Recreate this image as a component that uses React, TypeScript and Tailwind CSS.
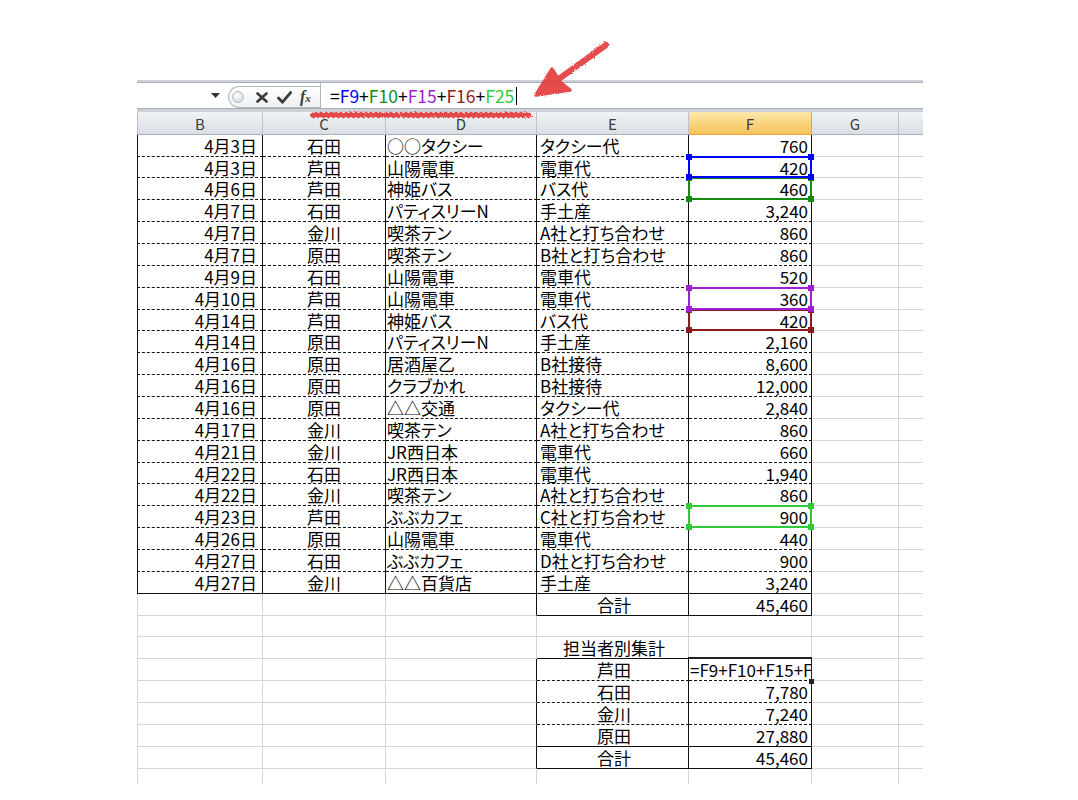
import clsx from 'clsx'
import type { ReactNode } from 'react'

type Line = 'k' | 'd' | 'g'
type Align = 'l' | 'c' | 'r'

interface Cell {
  text?: ReactNode
  align?: Align
}

const WIDTHS = [
  'w-[126px]',
  'w-[123px]',
  'w-[151px]',
  'w-[152px]',
  'w-[123px]',
  'w-[87px]',
  'w-[26px]',
]
const LETTERS = ['B', 'C', 'D', 'E', 'F', 'G', '']
const PAD = ['pr-[5px]', '', 'pl-[1px]', 'pl-[3px]', 'pr-[3px]', '', '']

const BOTTOM: Record<Line, string> = {
  k: 'border-b-[#111]',
  d: 'border-b-[#111] [border-bottom-style:dashed]',
  g: 'border-b-[#d6d6d6]',
}
const RIGHT: Record<Line, string> = {
  k: 'border-r-[#111]',
  d: 'border-r-[#111]',
  g: 'border-r-[#d6d6d6]',
}
const LEFT: Record<Line, string> = {
  k: 'border-l-[#111]',
  d: 'border-l-[#111]',
  g: 'border-l-[#d6d6d6]',
}
const ALIGN: Record<Align, string> = {
  l: 'text-left',
  c: 'text-center',
  r: 'text-right',
}

// colored range boxes drawn while the formula is being edited
const RANGES: Record<number, { line: string; dot: string; z: string }> = {
  1: { line: 'border-[#0000ff]', dot: 'bg-[#0000ff]', z: 'z-[6]' },
  2: { line: 'border-[#138a13]', dot: 'bg-[#138a13]', z: 'z-[5]' },
  7: { line: 'border-[#a01fd6]', dot: 'bg-[#a01fd6]', z: 'z-[4]' },
  8: { line: 'border-[#8e1b1b]', dot: 'bg-[#8e1b1b]', z: 'z-[3]' },
  17: { line: 'border-[#2fcc3a]', dot: 'bg-[#2fcc3a]', z: 'z-[2]' },
}

const expenses: [string, string, string, string, string][] = [
  ['4月3日', '石田', '○○タクシー', 'タクシー代', '760'],
  ['4月3日', '芦田', '山陽電車', '電車代', '420'],
  ['4月6日', '芦田', '神姫バス', 'バス代', '460'],
  ['4月7日', '石田', 'パティスリーN', '手土産', '3,240'],
  ['4月7日', '金川', '喫茶テン', 'A社と打ち合わせ', '860'],
  ['4月7日', '原田', '喫茶テン', 'B社と打ち合わせ', '860'],
  ['4月9日', '石田', '山陽電車', '電車代', '520'],
  ['4月10日', '芦田', '山陽電車', '電車代', '360'],
  ['4月14日', '芦田', '神姫バス', 'バス代', '420'],
  ['4月14日', '原田', 'パティスリーN', '手土産', '2,160'],
  ['4月16日', '原田', '居酒屋乙', 'B社接待', '8,600'],
  ['4月16日', '原田', 'クラブかれ', 'B社接待', '12,000'],
  ['4月16日', '原田', '△△交通', 'タクシー代', '2,840'],
  ['4月17日', '金川', '喫茶テン', 'A社と打ち合わせ', '860'],
  ['4月21日', '金川', 'JR西日本', '電車代', '660'],
  ['4月22日', '石田', 'JR西日本', '電車代', '1,940'],
  ['4月22日', '金川', '喫茶テン', 'A社と打ち合わせ', '860'],
  ['4月23日', '芦田', 'ぶぶカフェ', 'C社と打ち合わせ', '900'],
  ['4月26日', '原田', '山陽電車', '電車代', '440'],
  ['4月27日', '石田', 'ぶぶカフェ', 'D社と打ち合わせ', '900'],
  ['4月27日', '金川', '△△百貨店', '手土産', '3,240'],
]

const summary: [string, string][] = [
  ['石田', '7,780'],
  ['金川', '7,240'],
  ['原田', '27,880'],
  ['合計', '45,460'],
]

const EDIT_ROW = 24

function buildRows(): Cell[][] {
  const blank = (): Cell[] => [{}, {}, {}, {}, {}, {}, {}]
  const rows: Cell[][] = expenses.map(([date, who, shop, what, amount]) => [
    { text: date, align: 'r' },
    { text: who, align: 'c' },
    { text: shop, align: 'l' },
    { text: what, align: 'l' },
    { text: amount, align: 'r' },
    {},
    {},
  ])
  rows.push([{}, {}, {}, { text: '合計', align: 'c' }, { text: '45,460', align: 'r' }, {}, {}])
  rows.push(blank())
  rows.push([{}, {}, {}, { text: '担当者別集計', align: 'c' }, {}, {}, {}])
  rows.push([
    {},
    {},
    {},
    { text: '芦田', align: 'c' },
    { text: '=F9+F10+F15+F16+F25', align: 'l' },
    {},
    {},
  ])
  summary.forEach(([who, amount]) =>
    rows.push([{}, {}, {}, { text: who, align: 'c' }, { text: amount, align: 'r' }, {}, {}]),
  )
  rows.push(blank())
  return rows
}

function bottomLine(r: number, c: number): Line {
  const table = c <= 4
  const box = c === 3 || c === 4
  if (r <= 19) return table ? 'd' : 'g'
  if (r === 20) return table ? 'k' : 'g'
  if (r === 21 || r === 23 || r === 27 || r === 28) return box ? 'k' : 'g'
  if (r >= 24 && r <= 26) return box ? 'd' : 'g'
  return 'g'
}

function rightLine(r: number, c: number): Line {
  if (r <= 20) return c <= 4 ? 'k' : 'g'
  if (r === 21 || (r >= 24 && r <= 28)) return c >= 2 && c <= 4 ? 'k' : 'g'
  return 'g'
}

function RangeBox({ row }: { row: number }) {
  const range = RANGES[row]
  if (!range) return null
  return (
    <div
      className={clsx(
        'absolute -left-[1px] -top-[1px] -right-[1px] -bottom-[1px] border-2',
        range.line,
        range.z,
      )}
    >
      <div className={clsx('absolute -left-[4px] -top-[4px] size-[6px]', range.dot)} />
      <div className={clsx('absolute -right-[4px] -top-[4px] size-[6px]', range.dot)} />
      <div className={clsx('absolute -left-[4px] -bottom-[4px] size-[6px]', range.dot)} />
      <div className={clsx('absolute -right-[4px] -bottom-[4px] size-[6px]', range.dot)} />
    </div>
  )
}

function HeaderRow() {
  return (
    <div className="flex h-[22.7px]">
      {LETTERS.map((letter, c) => (
        <div
          key={c}
          className={clsx(
            'shrink-0 border-r border-b pt-[4px] text-center text-[15px] leading-none text-[#3c3c3c]',
            WIDTHS[c],
            c === 0 && 'border-l border-l-[#b7bec7]',
            c === 4
              ? 'border-r-[#e9a23f] border-b-[#f0a040] bg-[linear-gradient(#fde9ac,#f9d27a_55%,#f6c45c)]'
              : 'border-r-[#bcc3cb] border-b-[#a9b1bb] bg-[linear-gradient(#f1f3f5,#e4e7eb_55%,#dadee4)]',
          )}
        >
          {letter}
        </div>
      ))}
    </div>
  )
}

function FormulaBar() {
  return (
    <>
      <div className="h-[3px] border-b border-b-[#a7aeb7] bg-[#cdd2d8]" />
      <div className="flex h-[25px] bg-white">
        <div className="flex w-[91px] shrink-0 items-center justify-end pr-[8px]">
          <svg width="9" height="5" viewBox="0 0 9 5">
            <path d="M0 0h9L4.5 5z" fill="#333" />
          </svg>
        </div>
        <div className="mt-[3px] flex h-[22px] w-[92px] shrink-0 items-center rounded-l-[11px] border-y border-l border-[#b1b8c1] bg-[linear-gradient(#ffffff,#eef0f3)]">
          <div className="ml-[3px] size-[12px] rounded-full border border-[#b9bfc7] bg-[radial-gradient(circle_at_40%_35%,#ffffff,#c9ced5)]" />
          <svg className="ml-[12px]" width="12" height="11" viewBox="0 0 12 11">
            <path d="M1.5 1.5l9 8M10.5 1.5l-9 8" stroke="#3a3a3a" strokeWidth="2.6" strokeLinecap="round" />
          </svg>
          <svg className="ml-[9px]" width="15" height="13" viewBox="0 0 15 13">
            <path d="M1.5 7l4 4.2L13.6 1.6" stroke="#3a3a3a" strokeWidth="2.8" fill="none" strokeLinejoin="round" strokeLinecap="round" />
          </svg>
          <span className="ml-[8px] font-['Liberation_Serif',serif] text-[16px] leading-none font-bold italic text-[#3a3a3a]">
            f<span className="text-[11px]">x</span>
          </span>
        </div>
        <div className="w-px shrink-0 bg-[#b1b8c1]" />
        <div className="flex flex-1 items-center pl-[9px] text-[17.5px] leading-none">
          <span className="text-black">=</span>
          <span className="text-[#0000ff]">F9</span>
          <span className="text-black">+</span>
          <span className="text-[#138a13]">F10</span>
          <span className="text-black">+</span>
          <span className="text-[#a01fd6]">F15</span>
          <span className="text-black">+</span>
          <span className="text-[#8e1b1b]">F16</span>
          <span className="text-black">+</span>
          <span className="text-[#2fcc3a]">F25</span>
          <span className="ml-[2px] h-[18px] w-px bg-black" />
        </div>
      </div>
      <div className="h-[4px] border-t border-t-[#a7aeb7] bg-[#cdd2d8]" />
    </>
  )
}

function Sheet() {
  const rows = buildRows()
  return (
    <div className="h-[704px] w-[786px] overflow-hidden">
      <FormulaBar />
      <HeaderRow />
      {rows.map((cells, r) => (
        <div key={r} className="flex h-[21.86px] leading-[21px]">
          {cells.map((cell, c) => {
            const editing = r === EDIT_ROW && c === 4
            return (
              <div
                key={c}
                className={clsx(
                  'relative shrink-0 border-r border-b whitespace-nowrap',
                  WIDTHS[c],
                  editing ? 'pl-[1px]' : PAD[c],
                  RIGHT[rightLine(r, c)],
                  BOTTOM[bottomLine(r, c)],
                  c === 0 && 'border-l',
                  c === 0 && LEFT[r <= 20 ? 'k' : 'g'],
                  ALIGN[cell.align ?? 'l'],
                )}
              >
                {editing ? <div className="overflow-hidden">{cell.text}</div> : cell.text}
                {c === 4 && <RangeBox row={r} />}
                {editing && (
                  <div className="absolute -left-[1px] -top-[2px] right-[-1px] bottom-[-1px] z-[3] border-t-2 border-r border-[#222]">
                    <div className="absolute -right-[3px] -bottom-[3px] size-[5px] bg-[#222]" />
                  </div>
                )}
              </div>
            )
          })}
        </div>
      ))}
    </div>
  )
}

function Annotations() {
  // hand drawn red marks over the screenshot
  const wave: string[] = []
  for (let i = 0, x = 311; x <= 531; i++, x += 2.5) {
    wave.push(`${i === 0 ? 'M' : 'L'}${x} ${115 + (i % 2 === 0 ? -0.8 : 0.8)}`)
  }
  return (
    <svg
      className="pointer-events-none absolute left-0 top-0 z-10"
      width="1078"
      height="800"
      viewBox="0 0 1078 800"
    >
      <defs>
        <filter id="crayon" x="-20%" y="-20%" width="140%" height="140%">
          <feTurbulence type="fractalNoise" baseFrequency="0.9" numOctaves="2" seed="3" result="noise" />
          <feDisplacementMap in="SourceGraphic" in2="noise" scale="2.5" />
        </filter>
      </defs>
      <g filter="url(#crayon)" opacity="0.92">
        <path d="M606 45L549 86" stroke="#e53c3c" strokeWidth="6" strokeLinecap="round" />
        <path d="M536 95L552 69L560 82L570 90Z" fill="#e53c3c" stroke="#e53c3c" strokeWidth="3.5" strokeLinejoin="round" />
        <path d={wave.join('')} stroke="#e23a3a" strokeWidth="4.5" fill="none" />
      </g>
    </svg>
  )
}

export default function App() {
  return (
    <div className="relative h-[800px] w-[1078px] overflow-hidden bg-white font-['Noto_Sans_CJK_JP',sans-serif] text-[17px] text-black [font-feature-settings:'palt']">
      <div className="pt-[80px] pl-[137px]">
        <Sheet />
      </div>
      <Annotations />
    </div>
  )
}
